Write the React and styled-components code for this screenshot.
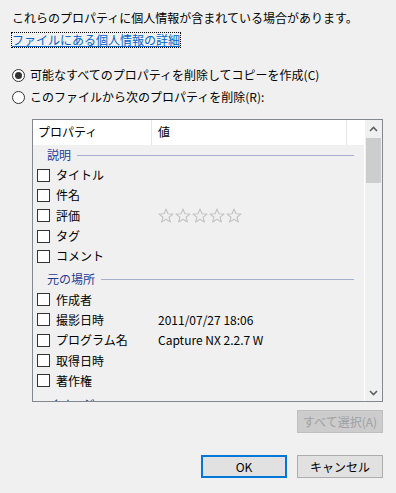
import React from 'react'
import styled, { createGlobalStyle } from 'styled-components'

const Global = createGlobalStyle`
  html, body {
    margin: 0;
    padding: 0;
    background: #f0f0f0;
  }
  body {
    font-family: 'Segoe UI', 'Noto Sans CJK JP', sans-serif;
    font-size: 12px;
    color: #000;
  }
`

const Dialog = styled.div`
  width: 396px;
  height: 493px;
  box-sizing: border-box;
  padding: 10px 13px 0 12px;
  display: flex;
  flex-direction: column;
  overflow: hidden;
`

const Note = styled.div`
  height: 16px;
  line-height: 16px;
`

const Link = styled.a`
  align-self: flex-start;
  margin-top: 7px;
  height: 14px;
  line-height: 14px;
  color: #0066cc;
  text-decoration: underline;
  outline: 1px dotted #000;
  cursor: pointer;
`

const RadioRow = styled.label`
  display: flex;
  align-items: center;
  gap: 5px;
  height: 22px;
  line-height: 22px;
  margin-top: ${p => p.$first ? '17px' : '0'};
`

const RadioCircle = styled.span`
  width: 11px;
  height: 11px;
  border: 1px solid #333;
  border-radius: 50%;
  background: #fff;
  display: flex;
  align-items: center;
  justify-content: center;
  &::after {
    content: '';
    width: 7px;
    height: 7px;
    border-radius: 50%;
    background: ${p => p.$on ? '#333' : 'transparent'};
  }
`

const ListBox = styled.div`
  margin: 11px 0 0 20px;
  width: 351px;
  height: 283px;
  flex-shrink: 0;
  box-sizing: border-box;
  border: 1px solid #828790;
  display: flex;
  overflow: hidden;
`

const ListMain = styled.div`
  flex: 1;
  display: flex;
  flex-direction: column;
  overflow: hidden;
`

const Header = styled.div`
  height: 25px;
  flex-shrink: 0;
  background: #fff;
  display: flex;
`

const HeadCell = styled.div`
  width: ${p => p.$w}px;
  box-sizing: border-box;
  padding-left: ${p => p.$pad}px;
  border-right: 1px solid #e5e5e5;
  line-height: 24px;
`

const HeadFill = styled.div`
  flex: 1;
`

const Group = styled.div`
  height: 20px;
  line-height: 20px;
  margin-top: ${p => p.$top}px;
  flex-shrink: 0;
  display: flex;
  align-items: center;
  padding-left: 14px;
  padding-right: 10px;
  gap: 6px;
  color: #1e3c96;
  &::after {
    content: '';
    flex: 1;
    height: 1px;
    background: #a8b0cf;
  }
`

const Row = styled.div`
  height: 20.3px;
  line-height: 20px;
  flex-shrink: 0;
  display: flex;
  align-items: center;
`

const NameCell = styled.div`
  width: 119px;
  padding-left: 4px;
  box-sizing: border-box;
  display: flex;
  align-items: center;
  gap: 6px;
`

const Box = styled.span`
  width: 11px;
  height: 11px;
  border: 1px solid #333;
  background: #fff;
  flex-shrink: 0;
`

const ValueCell = styled.div`
  padding-left: 6px;
  display: flex;
  align-items: center;
  gap: 1px;
`

const ScrollBar = styled.div`
  width: 17px;
  border-left: 1px solid #fff;
  background: #f0f0f0;
  display: flex;
  flex-direction: column;
`

const Arrow = styled.div`
  height: 17px;
  display: flex;
  align-items: center;
  justify-content: center;
  margin-top: ${p => p.$auto ? 'auto' : '0'};
`

const Thumb = styled.div`
  height: 45px;
  margin: 1px 1px 0 1px;
  background: #cdcdcd;
`

const Button = styled.button`
  width: 86px;
  height: 23px;
  box-sizing: border-box;
  font-family: 'Segoe UI', 'Noto Sans CJK JP', sans-serif;
  font-size: 12px;
  line-height: 20px;
  padding: 0;
  background: ${p => p.$disabled ? '#cccccc' : '#e1e1e1'};
  color: ${p => p.$disabled ? '#a0a0a0' : '#000'};
  border: ${p => p.$primary ? '2px solid #0078d7' : p.$disabled ? '1px solid #bfbfbf' : '1px solid #adadad'};
`

const ButtonRow = styled.div`
  display: flex;
  justify-content: flex-end;
  gap: 10px;
  flex-shrink: 0;
  margin-top: ${p => p.$top}px;
`

const Star = () => (
  <svg width="16" height="15" viewBox="0 0 16 15">
    <path d="M8 1 L9.9 5.8 L15 6 L11 9.2 L12.4 14 L8 11.3 L3.6 14 L5 9.2 L1 6 L6.1 5.8 Z"
      fill="none" stroke="#c4c4c4" strokeWidth="1.1" strokeLinejoin="round" />
  </svg>
)

const Chevron = ({ down }) => (
  <svg width="9" height="6" viewBox="0 0 9 6">
    <path d={down ? 'M1 1 L4.5 4.5 L8 1' : 'M1 5 L4.5 1.5 L8 5'} fill="none" stroke="#606060" strokeWidth="1.6" />
  </svg>
)

const groups = [
  {
    title: '説明', top: 0,
    items: [
      { name: 'タイトル' },
      { name: '件名' },
      { name: '評価', stars: true },
      { name: 'タグ' },
      { name: 'コメント' },
    ],
  },
  {
    title: '元の場所', top: 3,
    items: [
      { name: '作成者' },
      { name: '撮影日時', value: '2011/07/27 18:06' },
      { name: 'プログラム名', value: 'Capture NX 2.2.7 W' },
      { name: '取得日時' },
      { name: '著作権' },
    ],
  },
  { title: 'イメージ', top: 3, items: [] },
]

export default function App() {
  return (
    <Dialog>
      <Global />
      <Note>これらのプロパティに個人情報が含まれている場合があります。</Note>
      <Link>ファイルにある個人情報の詳細</Link>
      <RadioRow $first><RadioCircle $on />可能なすべてのプロパティを削除してコピーを作成(C)</RadioRow>
      <RadioRow><RadioCircle />このファイルから次のプロパティを削除(R):</RadioRow>
      <ListBox>
        <ListMain>
          <Header>
            <HeadCell $w={119} $pad={5}>プロパティ</HeadCell>
            <HeadCell $w={195} $pad={6}>値</HeadCell>
            <HeadFill />
          </Header>
          {groups.map(g => (
            <React.Fragment key={g.title}>
              <Group $top={g.top}>{g.title}</Group>
              {g.items.map(it => (
                <Row key={it.name}>
                  <NameCell><Box />{it.name}</NameCell>
                  <ValueCell>
                    {it.stars && [0, 1, 2, 3, 4].map(i => <Star key={i} />)}
                    {it.value}
                  </ValueCell>
                </Row>
              ))}
            </React.Fragment>
          ))}
        </ListMain>
        <ScrollBar>
          <Arrow><Chevron /></Arrow>
          <Thumb />
          <Arrow $auto><Chevron down /></Arrow>
        </ScrollBar>
      </ListBox>
      <ButtonRow $top={8}><Button $disabled>すべて選択(A)</Button></ButtonRow>
      <ButtonRow $top={22}>
        <Button $primary>OK</Button>
        <Button>キャンセル</Button>
      </ButtonRow>
    </Dialog>
  )
}
